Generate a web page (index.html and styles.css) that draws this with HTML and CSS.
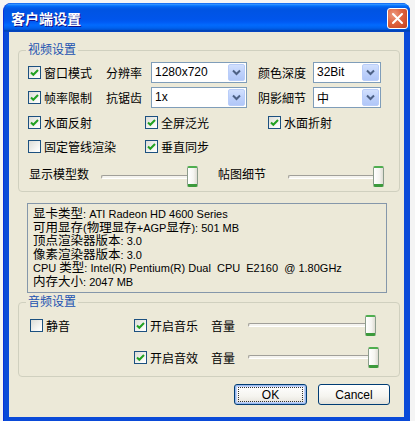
FILE: index.html
```html
<!DOCTYPE html>
<html lang="zh-CN">
<head>
<meta charset="utf-8">
<link rel="stylesheet" href="styles.css">
</head>
<body>
<div class="window">
  <div class="titlebar">
    <span class="title">客户端设置</span>
    <span class="close"><svg width="13" height="13" viewBox="0 0 13 13"><path d="M2 2 L11 11 M11 2 L2 11" stroke="#fff" stroke-width="2" stroke-linecap="round"/></svg></span>
  </div>
  <div class="client">
    <div class="group video">
      <span class="legend">视频设置</span>
      <div class="row r1">
        <label class="cell w78"><span class="cb on"><svg width="11" height="11" viewBox="0 0 11 11"><path d="M2 5.5 L4.3 7.8 L9 3" fill="none" stroke="#21a121" stroke-width="2"/></svg></span>窗口模式</label>
        <span class="cell w45">分辨率</span>
        <span class="combo w96"><span class="val">1280x720</span><span class="drop"><svg width="9" height="7" viewBox="0 0 9 7"><path d="M1 1.5 L4.5 5 L8 1.5" fill="none" stroke="#4d6185" stroke-width="2"/></svg></span></span>
        <span class="cell w55 ml11">颜色深度</span>
        <span class="combo w68"><span class="val">32Bit</span><span class="drop"><svg width="9" height="7" viewBox="0 0 9 7"><path d="M1 1.5 L4.5 5 L8 1.5" fill="none" stroke="#4d6185" stroke-width="2"/></svg></span></span>
      </div>
      <div class="row r2">
        <label class="cell w78"><span class="cb on"><svg width="11" height="11" viewBox="0 0 11 11"><path d="M2 5.5 L4.3 7.8 L9 3" fill="none" stroke="#21a121" stroke-width="2"/></svg></span>帧率限制</label>
        <span class="cell w45">抗锯齿</span>
        <span class="combo w96"><span class="val">1x</span><span class="drop"><svg width="9" height="7" viewBox="0 0 9 7"><path d="M1 1.5 L4.5 5 L8 1.5" fill="none" stroke="#4d6185" stroke-width="2"/></svg></span></span>
        <span class="cell w55 ml11">阴影細节</span>
        <span class="combo w68"><span class="val">中</span><span class="drop"><svg width="9" height="7" viewBox="0 0 9 7"><path d="M1 1.5 L4.5 5 L8 1.5" fill="none" stroke="#4d6185" stroke-width="2"/></svg></span></span>
      </div>
      <div class="row r3">
        <label class="cell w117"><span class="cb on"><svg width="11" height="11" viewBox="0 0 11 11"><path d="M2 5.5 L4.3 7.8 L9 3" fill="none" stroke="#21a121" stroke-width="2"/></svg></span>水面反射</label>
        <label class="cell w123"><span class="cb on"><svg width="11" height="11" viewBox="0 0 11 11"><path d="M2 5.5 L4.3 7.8 L9 3" fill="none" stroke="#21a121" stroke-width="2"/></svg></span>全屏泛光</label>
        <label class="cell"><span class="cb on"><svg width="11" height="11" viewBox="0 0 11 11"><path d="M2 5.5 L4.3 7.8 L9 3" fill="none" stroke="#21a121" stroke-width="2"/></svg></span>水面折射</label>
      </div>
      <div class="row r4">
        <label class="cell w117"><span class="cb"></span>固定管线渲染</label>
        <label class="cell w123"><span class="cb on"><svg width="11" height="11" viewBox="0 0 11 11"><path d="M2 5.5 L4.3 7.8 L9 3" fill="none" stroke="#21a121" stroke-width="2"/></svg></span>垂直同步</label>
      </div>
      <div class="row r5">
        <span class="cell w72 ml1 up">显示模型数</span>
        <span class="slider w97"><span class="track"></span><span class="thumb"></span></span>
        <span class="cell w70 ml20 up">帖图细节</span>
        <span class="slider w96"><span class="track"></span><span class="thumb"></span></span>
      </div>
    </div>

    <div class="info">
      <div><span class="zh">显卡类型</span>: ATI Radeon HD 4600 Series</div>
      <div><span class="zh">可用显存</span>(<span class="zh">物理显存</span>+AGP<span class="zh">显存</span>): 501 MB</div>
      <div><span class="zh">顶点渲染器版本</span>: 3.0</div>
      <div><span class="zh">像素渲染器版本</span>: 3.0</div>
      <div>CPU <span class="zh">类型</span>: Intel(R) Pentium(R) Dual&nbsp; CPU&nbsp; E2160&nbsp; @ 1.80GHz</div>
      <div><span class="zh">内存大小</span>: 2047 MB</div>
    </div>

    <div class="group audio">
      <span class="legend">音频设置</span>
      <div class="row a1">
        <label class="cell w104"><span class="cb"></span>静音</label>
        <label class="cell w77"><span class="cb on"><svg width="11" height="11" viewBox="0 0 11 11"><path d="M2 5.5 L4.3 7.8 L9 3" fill="none" stroke="#21a121" stroke-width="2"/></svg></span>开启音乐</label>
        <span class="cell w37">音量</span>
        <span class="slider w128"><span class="track"></span><span class="thumb"></span></span>
      </div>
      <div class="row a2">
        <span class="cell w104"></span>
        <label class="cell w77"><span class="cb on"><svg width="11" height="11" viewBox="0 0 11 11"><path d="M2 5.5 L4.3 7.8 L9 3" fill="none" stroke="#21a121" stroke-width="2"/></svg></span>开启音效</label>
        <span class="cell w37">音量</span>
        <span class="slider w131"><span class="track"></span><span class="thumb"></span></span>
      </div>
    </div>

    <div class="buttons">
      <button class="btn default"><span class="focus">OK</span></button>
      <button class="btn">Cancel</button>
    </div>
  </div>
</div>
</body>
</html>
```

FILE: styles.css
```css
* { box-sizing: border-box; }
html, body { margin: 0; padding: 0; }
body {
  background: #f4f4f4;
  font-family: "Liberation Sans", "Noto Sans CJK SC", sans-serif;
  font-size: 12px;
  color: #000;
  width: 415px;
  height: 421px;
  overflow: hidden;
}
.window {
  margin: 3px 0 0 3px;
  width: 407px;
  height: 418px;
  background: #0a4ad8;
  border-radius: 8px 8px 0 0;
  display: flex;
  flex-direction: column;
  padding: 0 6px 4px 5px;
  border-left: 1px solid #0831d9;
}
.titlebar {
  height: 29px;
  margin: 0 -6px 0 -5px;
  border-radius: 8px 8px 0 0;
  background: linear-gradient(to bottom, #0058ee 0%, #3593ff 4%, #288eff 6%, #127dff 8%, #036ffc 10%, #0262ee 14%, #0057e5 20%, #0054e3 24%, #0055eb 56%, #005bf5 66%, #026afe 76%, #0062ef 86%, #0052d6 92%, #0040ab 96%, #0a46d0 100%);
  display: flex;
  align-items: center;
  justify-content: space-between;
  padding: 0 2px 0 7px;
}
.title {
  color: #fff;
  font-weight: bold;
  font-size: 14px;
  font-family: "Noto Sans CJK SC", sans-serif;
  text-shadow: 1px 1px 0 #0f1089;
  margin-top: 1px;
}
.close {
  width: 21px;
  height: 21px;
  border: 1px solid #fff;
  border-radius: 3px;
  background: radial-gradient(circle at 30% 30%, #ec9a80 0%, #e0633f 45%, #c2401f 100%);
  display: flex;
  align-items: center;
  justify-content: center;
  margin-top: 1px;
}
.client {
  flex: 1;
  background: #ece9d8;
  padding: 18px 0 0 9px;
  display: flex;
  flex-direction: column;
}
.group {
  position: relative;
  border: 1px solid #d0d0bf;
  border-radius: 4px;
  width: 382px;
}
.legend {
  position: absolute;
  top: -8px;
  left: 7px;
  padding: 0 2px;
  background: #ece9d8;
  color: #2152b0;
  line-height: 14px;
}
.video { padding: 11px 0 4px 9px; }
.row { display: flex; align-items: center; height: 20px; }
.r2 { margin-top: 5px; }
.r3 { margin-top: 5px; }
.r4 { margin-top: 4px; }
.r5 { margin-top: 10px; height: 21px; }
.cell { display: flex; align-items: center; white-space: nowrap; flex: none; }
.up { margin-top: -6px; }
.w37 { width: 37px; }
.w45 { width: 45px; }
.w55 { width: 55px; }
.w68 { width: 68px; }
.w70 { width: 70px; }
.w72 { width: 72px; }
.w77 { width: 77px; }
.w78 { width: 78px; }
.w96 { width: 96px; }
.w97 { width: 97px; }
.w104 { width: 104px; }
.w117 { width: 117px; }
.w123 { width: 123px; }
.w128 { width: 128px; }
.w131 { width: 131px; }
.ml1 { margin-left: 1px; }
.ml11 { margin-left: 11px; }
.ml20 { margin-left: 20px; }
.cb {
  width: 13px;
  height: 13px;
  border: 1px solid #1c5180;
  background: linear-gradient(135deg, #dcdcd7 0%, #fbfbf9 80%, #fff 100%);
  margin-right: 3px;
  display: flex;
  align-items: center;
  justify-content: center;
  flex: none;
}
.combo {
  height: 21px;
  border: 1px solid #7f9db9;
  background: #fff;
  display: flex;
  align-items: center;
  justify-content: space-between;
  flex: none;
}
.val { padding-left: 3px; font-size: 12px; }
.drop {
  width: 17px;
  height: 17px;
  margin-right: 1px;
  border: 1px solid #b9cdf9;
  border-radius: 2px;
  background: linear-gradient(to bottom, #d2e0fd 0%, #bed1fb 50%, #b1c7f8 100%);
  display: flex;
  align-items: center;
  justify-content: center;
}
.slider { display: flex; align-items: center; height: 21px; flex: none; }
.track {
  flex: 1;
  height: 4px;
  border-top: 1px solid #a09f99;
  border-left: 1px solid #a09f99;
  border-bottom: 1px solid #fff;
  border-radius: 2px;
  background: #f4f3ee;
  margin-right: -2px;
}
.thumb {
  width: 11px;
  height: 21px;
  border: 1px solid #8c9c8c;
  border-top: 2px solid #4fae4f;
  border-bottom: 3px solid #3c9a3c;
  border-radius: 2px;
  background: linear-gradient(to right, #fff 0%, #f5f5f1 60%, #dedcd3 100%);
}
.info {
  margin: 11px 0 0 9px;
  width: 360px;
  height: 90px;
  border: 1px solid #8597aa;
  padding: 2px 0 0 5px;
  line-height: 13.6px;
  font-size: 11px;
  white-space: nowrap;
}
.info > div { height: 13.6px; }
.zh { font-size: 12.5px; font-family: "Noto Sans CJK SC", sans-serif; }
.audio { margin-top: 9px; padding: 11px 0 8px 11px; }
.audio .row { height: 22px; }
.a2 { margin-top: 10px; }
.buttons {
  display: flex;
  justify-content: flex-end;
  gap: 11px;
  margin-top: 7px;
  padding-right: 14px;
}
.btn {
  width: 72px;
  height: 21px;
  border: 1px solid #003c74;
  border-radius: 3px;
  background: linear-gradient(to bottom, #fff 0%, #f5f4ef 60%, #e3e1d8 100%);
  font-family: "Liberation Sans", sans-serif;
  font-size: 12px;
  color: #000;
  padding: 0;
  display: flex;
  align-items: center;
  justify-content: center;
}
.btn.default {
  width: 73px;
  box-shadow: inset 0 0 0 1px #98b8ea, inset 0 0 0 2px #c1d3fb;
}
.focus {
  display: flex;
  align-items: center;
  justify-content: center;
  width: 65px;
  height: 15px;
  border: 1px dotted #333;
}
```
